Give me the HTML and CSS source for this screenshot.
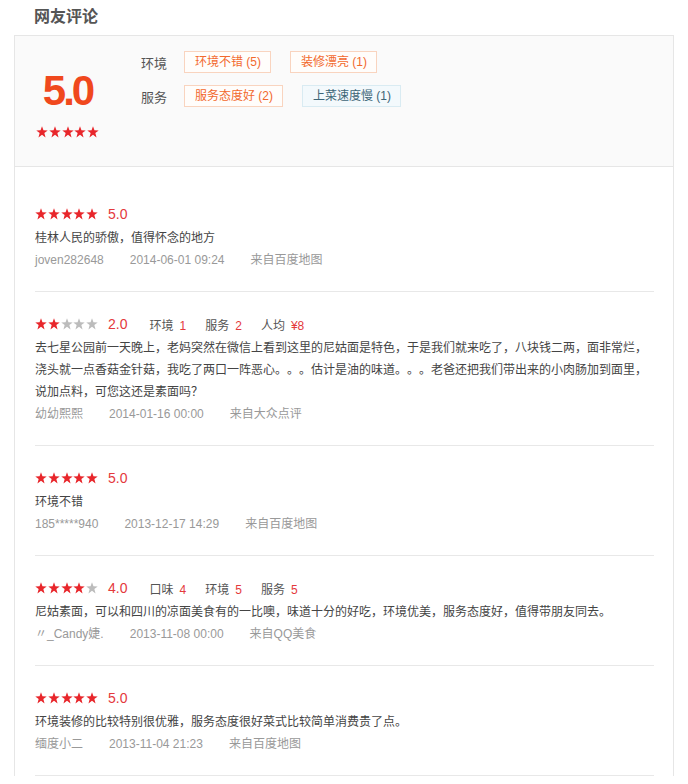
FILE: index.html
```html
<!DOCTYPE html>
<html lang="zh-CN">
<head>
<meta charset="utf-8">
<title>网友评论</title>
<link rel="stylesheet" href="styles.css">
</head>
<body>
<svg class="defs" width="0" height="0" aria-hidden="true">
  <defs>
    <symbol id="star" viewBox="0 0 12 12">
      <polygon points="6,0.3 7.45,4.3 11.7,4.4 8.35,7.0 9.55,11.4 6,8.85 2.45,11.4 3.65,7.0 0.3,4.4 4.55,4.3"/>
    </symbol>
  </defs>
</svg>
<div class="page">
  <h2 class="title">网友评论</h2>
  <div class="box">
    <div class="summary">
      <div class="overall">
        <div class="big-score">5.0</div>
        <div class="stars">
          <svg class="s on"><use href="#star"/></svg><svg class="s on"><use href="#star"/></svg><svg class="s on"><use href="#star"/></svg><svg class="s on"><use href="#star"/></svg><svg class="s on"><use href="#star"/></svg>
        </div>
      </div>
      <div class="tags">
        <div class="tag-row">
          <span class="tag-label">环境</span>
          <span class="tag">环境不错 (5)</span>
          <span class="tag">装修漂亮 (1)</span>
        </div>
        <div class="tag-row">
          <span class="tag-label">服务</span>
          <span class="tag">服务态度好 (2)</span>
          <span class="tag tag-neg">上菜速度慢 (1)</span>
        </div>
      </div>
    </div>

    <ul class="reviews">
      <li class="review">
        <div class="rating">
          <span class="stars"><svg class="s on"><use href="#star"/></svg><svg class="s on"><use href="#star"/></svg><svg class="s on"><use href="#star"/></svg><svg class="s on"><use href="#star"/></svg><svg class="s on"><use href="#star"/></svg></span>
          <span class="score">5.0</span>
        </div>
        <p class="content">桂林人民的骄傲，值得怀念的地方</p>
        <div class="meta"><span class="user">joven282648</span><span class="time">2014-06-01 09:24</span><span class="src">来自百度地图</span></div>
      </li>
      <li class="review">
        <div class="rating">
          <span class="stars"><svg class="s on"><use href="#star"/></svg><svg class="s on"><use href="#star"/></svg><svg class="s"><use href="#star"/></svg><svg class="s"><use href="#star"/></svg><svg class="s"><use href="#star"/></svg></span>
          <span class="score">2.0</span>
          <span class="item">环境<em>1</em></span>
          <span class="item">服务<em>2</em></span>
          <span class="item">人均<em>¥8</em></span>
        </div>
        <p class="content">去七星公园前一天晚上，老妈突然在微信上看到这里的尼姑面是特色，于是我们就来吃了，八块钱二两，面非常烂，浇头就一点香菇金针菇，我吃了两口一阵恶心。。。估计是油的味道。。。老爸还把我们带出来的小肉肠加到面里，说加点料，可您这还是素面吗？</p>
        <div class="meta"><span class="user">幼幼熙熙</span><span class="time">2014-01-16 00:00</span><span class="src">来自大众点评</span></div>
      </li>
      <li class="review">
        <div class="rating">
          <span class="stars"><svg class="s on"><use href="#star"/></svg><svg class="s on"><use href="#star"/></svg><svg class="s on"><use href="#star"/></svg><svg class="s on"><use href="#star"/></svg><svg class="s on"><use href="#star"/></svg></span>
          <span class="score">5.0</span>
        </div>
        <p class="content">环境不错</p>
        <div class="meta"><span class="user">185*****940</span><span class="time">2013-12-17 14:29</span><span class="src">来自百度地图</span></div>
      </li>
      <li class="review">
        <div class="rating">
          <span class="stars"><svg class="s on"><use href="#star"/></svg><svg class="s on"><use href="#star"/></svg><svg class="s on"><use href="#star"/></svg><svg class="s on"><use href="#star"/></svg><svg class="s"><use href="#star"/></svg></span>
          <span class="score">4.0</span>
          <span class="item">口味<em>4</em></span>
          <span class="item">环境<em>5</em></span>
          <span class="item">服务<em>5</em></span>
        </div>
        <p class="content">尼姑素面，可以和四川的凉面美食有的一比噢，味道十分的好吃，环境优美，服务态度好，值得带朋友同去。</p>
        <div class="meta"><span class="user">〃_Candy婕.</span><span class="time">2013-11-08 00:00</span><span class="src">来自QQ美食</span></div>
      </li>
      <li class="review">
        <div class="rating">
          <span class="stars"><svg class="s on"><use href="#star"/></svg><svg class="s on"><use href="#star"/></svg><svg class="s on"><use href="#star"/></svg><svg class="s on"><use href="#star"/></svg><svg class="s on"><use href="#star"/></svg></span>
          <span class="score">5.0</span>
        </div>
        <p class="content">环境装修的比较特别很优雅，服务态度很好菜式比较简单消费贵了点。</p>
        <div class="meta"><span class="user">缅度小二</span><span class="time">2013-11-04 21:23</span><span class="src">来自百度地图</span></div>
      </li>
    </ul>
  </div>
</div>
</body>
</html>
```

FILE: styles.css
```css
* { box-sizing: border-box; }

html, body {
  margin: 0;
  padding: 0;
  background: #fff;
}

body {
  font-family: "Liberation Sans", "Noto Sans CJK SC", sans-serif;
  font-size: 12px;
  color: #333;
  text-spacing-trim: space-all;
}

.defs {
  position: absolute;
  width: 0;
  height: 0;
  overflow: hidden;
}

.page {
  padding-left: 14px;
  width: 688px;
}

.title {
  margin: 0;
  height: 35px;
  line-height: 30px;
  padding-left: 20px;
  font-family: "Noto Sans CJK SC", sans-serif;
  font-size: 16px;
  font-weight: 700;
  color: #555;
}

.box {
  width: 660px;
  border: 1px solid #e6e6e6;
  border-bottom: none;
  background: #fff;
}

/* summary */
.summary {
  display: flex;
  height: 131px;
  background: #fafafa;
  border-bottom: 1px solid #e6e6e6;
}

.overall {
  width: 105px;
  flex: none;
  text-align: center;
  padding-top: 30px;
}

.big-score {
  font-family: "Liberation Sans", sans-serif;
  font-weight: 700;
  font-size: 42px;
  line-height: 50px;
  color: #f0481d;
  letter-spacing: -3px;
  padding-left: 0;
}

.overall .stars {
  margin-top: 10px;
  justify-content: center;
}

.tags {
  padding-top: 15px;
  margin-left: 21px;
  display: flex;
  flex-direction: column;
  gap: 12px;
}

.tag-row {
  display: flex;
  align-items: center;
  gap: 19px;
  height: 22px;
}

.tag-label {
  width: 24px;
  flex: none;
  white-space: nowrap;
  font-size: 13px;
  color: #555;
  font-family: "Noto Sans CJK SC", sans-serif;
}

.tag {
  height: 22px;
  line-height: 20px;
  padding: 0 9px 0 10px;
  border: 1px solid #f9d4bf;
  background: #fffdfb;
  color: #f2692d;
  white-space: nowrap;
}

.tag-neg {
  border-color: #d9ebf2;
  background: #f3f9fc;
  color: #3d6577;
}

/* stars */
.stars {
  display: inline-flex;
  gap: 0.75px;
}

.s {
  width: 12px;
  height: 12px;
  fill: #bcbcbc;
  display: block;
}

.s.on {
  fill: #e8262b;
}

/* reviews */
.reviews {
  list-style: none;
  margin: 0;
  padding: 15px 19px 0 20px;
}

.review {
  padding: 21px 0 20px;
  border-bottom: 1px solid #e8e8e8;
}

.rating {
  display: flex;
  align-items: center;
  height: 22px;
  margin-bottom: 2px;
}

.score {
  margin-left: 10px;
  font-size: 14px;
  color: #e4393c;
  margin-right: 3px;
}

.item {
  margin-left: 19px;
  color: #555;
}

.item em {
  font-style: normal;
  color: #e4393c;
  margin-left: 6px;
}

.content {
  margin: 0;
  line-height: 22px;
  color: #444;
}

.meta {
  line-height: 22px;
  color: #999;
}

.meta span {
  margin-right: 26px;
}
```
